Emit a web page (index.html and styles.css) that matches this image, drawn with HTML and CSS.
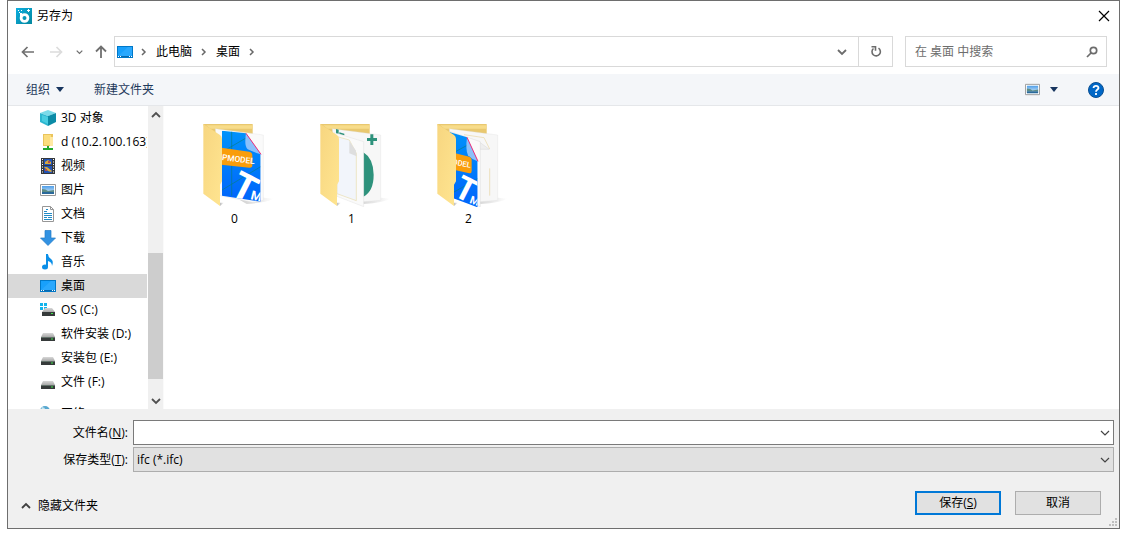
FILE: index.html
```html
<!DOCTYPE html>
<html lang="zh-CN">
<head>
<meta charset="utf-8">
<title>另存为</title>
<link rel="stylesheet" href="styles.css">
</head>
<body>
<svg class="defs" aria-hidden="true">
  <defs>
    <linearGradient id="coverFill" x1="0" y1="0" x2="1" y2="1"><stop offset="0" stop-color="#f7d680"/><stop offset="1" stop-color="#ffe591"/></linearGradient>
    <linearGradient id="modelFill" x1="0" y1="0" x2="0" y2="1"><stop offset="0" stop-color="#0094fb"/><stop offset="1" stop-color="#0063fb"/></linearGradient>
    <linearGradient id="shadowFill"><stop offset="0" stop-color="#bbb"/><stop offset="1" stop-color="#fff"/></linearGradient>
    <linearGradient id="appFill" x1="0" y1="0" x2="1" y2="1"><stop offset="0" stop-color="#0caee0"/><stop offset="1" stop-color="#04879e"/></linearGradient>
    <linearGradient id="driveFill" x1="0" y1="0" x2="0" y2="1"><stop offset="0" stop-color="#d8d8d8"/><stop offset="1" stop-color="#a8a8a8"/></linearGradient>
    <linearGradient id="skyFill" x1="0" y1="0" x2="0" y2="1"><stop offset="0" stop-color="#4d9de8"/><stop offset="1" stop-color="#e4f3fb"/></linearGradient>
    <symbol id="desktop" viewBox="0 0 16 16"><path fill="#0078c8" d="M0 2h16v12H0z"/><path fill="#18a0fb" d="M1 3h14v9H1z"/><path fill="#3bb0ff" d="M1 12 11 3h4v9z" opacity=".5"/><path fill="#0868ad" d="M1 12h14v1H1z"/><path fill="#fff" d="M1 12h1v1H1zM3 12h1v1H3zM12 12h1v1h-1zM14 12h1v1h-1z"/></symbol>
    <symbol id="picture" viewBox="0 0 16 16"><path fill="#fff" stroke="#999" d="M.5 2.500h15v11H.5z"/><path fill="url(#skyFill)" d="M2 4h12v8H2z"/><path fill="#5d8c86" d="M2 7q4 0 6 2l6-1v2H2z"/><path fill="#29699b" d="M2 10h12v2H2z"/></symbol>
    <symbol id="drive" viewBox="0 0 16 16"><path fill="url(#driveFill)" d="M3 7h10l2 4H1z"/><path fill="#363a3a" d="M1 11h14v4H1z"/><path fill="#62716a" d="M1 11h14v1H1z"/><path fill="#3ee64a" d="M11 12.500h2v1h-2z"/></symbol>
    <symbol id="right" viewBox="0 0 6 8"><path d="M1 1l3 3-3 3" fill="none" stroke="#686868" stroke-width="1.500"/></symbol>
    <symbol id="down" viewBox="0 0 10 8"><path d="M1 2l4 4 4-4" fill="none" stroke="currentColor" stroke-width="1.800"/></symbol>
    <symbol id="thin-down" viewBox="0 0 10 8"><path d="M1 2l4 4 4-4" fill="none" stroke="#444" stroke-width="1.200"/></symbol>
    <symbol id="folder-back" viewBox="30 36 225 255"><path fill="url(#shadowFill)" opacity=".7" d="M150 270l60-8 40 4q-20 12-80 16z"/><path fill="#e9c86f" d="M40 42h148v200H90z"/><path fill="#f7dc8a" d="M48 46h139v10H62z"/></symbol>
    <symbol id="folder-cover" viewBox="30 36 225 255"><path fill="url(#shadowFill)" d="M90 278h12l-12 10z"/><path fill="url(#coverFill)" d="M40 42l50 33q6 4 6 12v127l-6 10v64l-50-37z"/></symbol>
    <clipPath id="clipWide"><path d="M96 62l72 8 44 63v142L96 257z"/></clipPath>
    <clipPath id="clipNarrow"><path d="M76 66l53 16 32 72v138l-73-27z"/></clipPath>
  </defs>
</svg>

<main class="dialog">
  <header class="titlebar">
    <svg class="icon" viewBox="0 0 16 16"><path fill="url(#appFill)" d="M0 0h16v16H0z"/><circle cx="8.500" cy="10" r="3.400" fill="none" stroke="#fff" stroke-width="2.800"/><path fill="#fff" d="M4 5h2v5H4zM11 2h3v1h-3zM12 1h1v3h-1zM2 2h1v1H2zM5 2h1v1H5zM3 4h1v1H3z"/></svg>
    <h1>另存为</h1>
    <button class="plain close" aria-label="关闭"><svg width="12" height="12" viewBox="0 0 12 12"><path d="M1 1l10 10M11 1L1 11" stroke="#000" stroke-width="1.200"/></svg></button>
  </header>

  <nav class="navbar">
    <div class="history">
      <button class="plain" aria-label="后退"><svg width="14" height="12" viewBox="0 0 14 12"><path d="M13 6H2M6.500 1L1.500 6l5 5" fill="none" stroke="#707070" stroke-width="1.700"/></svg></button>
      <button class="plain" aria-label="前进" disabled><svg width="14" height="12" viewBox="0 0 14 12"><path d="M1 6h11M7.500 1l5 5-5 5" fill="none" stroke="#dcdcdc" stroke-width="1.700"/></svg></button>
      <button class="plain recent" aria-label="最近位置"><svg width="7" height="6"><use href="#down"/></svg></button>
      <button class="plain" aria-label="上移"><svg width="12" height="13" viewBox="0 0 12 13"><path d="M6 13V2M1 6.500l5-5 5 5" fill="none" stroke="#707070" stroke-width="1.800"/></svg></button>
    </div>
    <div class="address">
      <div class="crumbs">
        <svg class="icon"><use href="#desktop"/></svg>
        <svg class="sep"><use href="#right"/></svg>
        <a href="#">此电脑</a>
        <svg class="sep"><use href="#right"/></svg>
        <a href="#">桌面</a>
        <svg class="sep"><use href="#right"/></svg>
      </div>
      <button class="plain expand" aria-label="以前的位置"><svg width="10" height="8"><use href="#down"/></svg></button>
      <button class="plain refresh" aria-label="刷新"><svg width="12" height="13" viewBox="0 0 12 13"><path d="M8.500 3.200A4.200 4.200 0 1 1 3.500 3.500M1.500 1.800h4v4" fill="none" stroke="#6c6c6c" stroke-width="1.600"/></svg></button>
    </div>
    <label class="search">
      <input type="search" placeholder="在 桌面 中搜索" aria-label="在 桌面 中搜索">
      <svg width="12" height="12" viewBox="0 0 12 12"><circle cx="7.500" cy="4.500" r="3.200" fill="none" stroke="#6c6c6c" stroke-width="1.700"/><path d="M5 7L1 11" stroke="#6c6c6c" stroke-width="1.700"/></svg>
    </label>
  </nav>

  <div class="toolbar">
    <button class="plain">组织 <svg width="8" height="5" viewBox="0 0 8 5"><path fill="#17355f" d="M0 0h8L4 5z"/></svg></button>
    <button class="plain">新建文件夹</button>
    <button class="plain view" aria-label="更改视图"><svg width="15" height="15"><use href="#picture"/></svg><svg width="8" height="5" viewBox="0 0 8 5"><path fill="#17355f" d="M0 0h8L4 5z"/></svg></button>
    <button class="plain help" aria-label="帮助"><svg class="icon" viewBox="0 0 16 16"><circle cx="8" cy="8" r="7.500" fill="#0067c7" stroke="#0b4f91"/><path d="M5.500 6q.2-2.200 2.500-2.200T10.500 6C10.500 7.600 8 7.600 8 9.800M8 11v2" fill="none" stroke="#fff" stroke-width="1.800"/></svg></button>
  </div>

  <div class="content">
    <aside class="sidebar">
      <ul class="tree">
        <li><svg class="icon" viewBox="0 0 16 16"><path fill="#7bdbe9" d="M0 3l8-3 8 3-8 3z"/><path fill="#2cb6cf" d="M0 3l8 3v10l-8-4z"/><path fill="#0b8ba6" d="M16 3L8 6v10l8-4z"/><path fill="#48cde0" d="M2 5l6 2v7l-6-3z"/></svg>3D 对象</li>
        <li><svg class="icon" viewBox="0 0 16 16"><path fill="#eac45c" d="M3 0h10v12H3z"/><path fill="#fbdd7e" d="M4 1h7v10H4z"/><path fill="#ffe9a3" d="M10 3h3v9h-3z"/><path fill="#23a82c" d="M7 12h2v2h4v2H3v-2h4z"/></svg>d (10.2.100.163)</li>
        <li><svg class="icon" viewBox="0 0 16 16"><path fill="#35383c" d="M1 0h14v16H1z"/><path fill="#2254b5" d="M4 1h8v6H4zM4 8h8v7H4z"/><path fill="#d7a83e" d="M5 4l3-2 3 2v2H5zM4 9h3l5 4-1 1-3-1z"/><path fill="#b24c4c" d="M8 3h2v2H8zM5 11h2v2H5z"/><path stroke="#fff" stroke-dasharray="1 1.500" d="M2.500 1v14M13.500 1v14"/></svg>视频</li>
        <li><svg class="icon"><use href="#picture"/></svg>图片</li>
        <li><svg class="icon" viewBox="0 0 16 16"><path fill="#fff" stroke="#969696" d="M2.500.5h8l3 3v12h-11z"/><path fill="none" stroke="#969696" d="M10.500.5v3h3"/><path stroke="#238bc6" d="M4 5.500h3M4 7.500h8M4 9.500h8M4 11.500h3M8 11.500h4M4 13.500h8M6 3.500h2"/></svg>文档</li>
        <li><svg class="icon" viewBox="0 0 16 16"><path fill="#3292e2" stroke="#237bc5" stroke-width=".7" d="M5 .5h6V8h4.500L8 15.500.5 8H5z"/></svg>下载</li>
        <li><svg class="icon" viewBox="0 0 16 16"><ellipse cx="5" cy="13" rx="3" ry="2.500" fill="#0b8fe8"/><path fill="#0b8fe8" d="M6 0h2q0 3 3 5t1 7q0-4-4-5v6H6z"/></svg>音乐</li>
        <li class="selected"><svg class="icon"><use href="#desktop"/></svg>桌面</li>
        <li><svg class="icon" viewBox="0 0 16 16"><path fill="#12b4ec" d="M0 1h3v3H0zM4 1h3v3H4zM0 5h3v3H0zM4 5h3v3H4z"/><path fill="url(#driveFill)" d="M5 6h7l3 4H2z"/><path fill="#363a3a" d="M2 10h13v4H2z"/><path fill="#3ee64a" d="M11 11h2v1h-2z"/></svg>OS (C:)</li>
        <li><svg class="icon"><use href="#drive"/></svg>软件安装 (D:)</li>
        <li><svg class="icon"><use href="#drive"/></svg>安装包 (E:)</li>
        <li><svg class="icon"><use href="#drive"/></svg>文件 (F:)</li>
        <li class="network"><svg class="icon" viewBox="0 0 16 16"><circle cx="5" cy="5" r="5" fill="#58a7cf"/><path fill="#c2e4ef" d="M2 1l3 1-1 2-3 1z"/><path fill="#1686cd" d="M3 7h12v7H3z"/></svg>网络</li>
      </ul>
      <div class="scrollbar">
        <svg class="up" width="10" height="8"><use href="#down"/></svg>
        <div class="track"><div class="thumb"></div></div>
        <svg width="10" height="8"><use href="#down"/></svg>
      </div>
    </aside>

    <section class="files">
      <figure>
        <svg class="folder" viewBox="30 36 225 255">
          <use href="#folder-back" x="30" y="36" width="225" height="255"/>
          <path fill="#fafafa" stroke="#ddd" d="M76 56l93 12 51 7v196l-32 6-98-20z"/>
          <g clip-path="url(#clipWide)">
            <path fill="url(#modelFill)" d="M90 55h125v225H90z"/>
            <path fill="none" stroke="#087f83" stroke-width="2" d="M96 126l72-42M96 240l116-70M125 257V60"/>
            <text class="mark" transform="translate(114 253) rotate(27)" font-size="115">T</text>
            <text class="mark" transform="translate(180 267) rotate(14)" font-size="38">M</text>
          </g>
          <path fill="#8bc0fa" d="M168 70q-6 38 5 48 17 8 39 15z"/>
          <path fill="none" stroke="#f32e78" stroke-width="3" d="M168 70l45 63"/>
          <path fill="#f99d0b" d="M94 113l84 12q9 2 9 11v29q0 9-9 8l-84-9z"/>
          <text class="tag" transform="translate(95 150) rotate(7)" font-size="25">PMODEL</text>
          <use href="#folder-cover" x="30" y="36" width="225" height="255"/>
        </svg>
        <figcaption>0</figcaption>
      </figure>
      <figure>
        <svg class="folder" viewBox="30 36 225 255">
          <use href="#folder-back" x="30" y="36" width="225" height="255"/>
          <path fill="#f7f7f7" stroke="#ddd" d="M76 56l145 19v196l-52 4-79-20z"/>
          <path fill="#2e927c" d="M87 57l8 2v12h-8zM97 67l15 4v5l-15-4zM190 73h9v11h11v9h-11v12h-9V93h-10v-9h10zM169 127q30 18 31 67 0 50-31 66z"/>
          <path fill="#fafafa" stroke="#d8d8d8" d="M82 68l88 27v195l-80-31z"/>
          <path fill="#f2f5fb" stroke="#e9dcae" stroke-width="2" d="M91 80l36 10 21 40v142l-58-21z"/>
          <path fill="#dedede" d="M127 93v37l22 9-3-18z"/>
          <use href="#folder-cover" x="30" y="36" width="225" height="255"/>
        </svg>
        <figcaption>1</figcaption>
      </figure>
      <figure>
        <svg class="folder" viewBox="30 36 225 255">
          <use href="#folder-back" x="30" y="36" width="225" height="255"/>
          <path fill="#f7f7f7" stroke="#ddd" d="M76 56l145 19v196l-52 4-79-20z"/>
          <path fill="none" stroke="#e9d7a5" stroke-width="2" d="M120 74l60 9 17 34M197 175v82"/>
          <path fill="#eee" stroke="#ccc" d="M165 95l31 23h-28z"/>
          <path fill="#fafafa" stroke="#ccc" d="M78 65l52 17 39 13v195l-79-27z"/>
          <g clip-path="url(#clipNarrow)">
            <path fill="url(#modelFill)" d="M76 55h90v240H76z"/>
            <path fill="none" stroke="#087f83" stroke-width="2" d="M76 135l55-30M76 254l85-48"/>
            <text class="mark" transform="translate(84 254) rotate(27)" font-size="98">T</text>
            <text class="mark" transform="translate(135 278) rotate(20)" font-size="32">M</text>
          </g>
          <path fill="#8bc0fa" d="M129 82q-5 39 3 54 11 12 29 18z"/>
          <path fill="none" stroke="#f32e78" stroke-width="3" d="M129 82l33 72"/>
          <path fill="#f99d0b" d="M82 127l54 13q7 3 7 10v32q0 9-7 8l-54-12z"/>
          <text class="tag" transform="translate(84 163) rotate(11)" font-size="23">ODEL</text>
          <use href="#folder-cover" x="30" y="36" width="225" height="255"/>
        </svg>
        <figcaption>2</figcaption>
      </figure>
    </section>
  </div>

  <form class="save-form">
    <div class="fields">
      <label for="filename">文件名(<u>N</u>):</label>
      <div class="combo"><input id="filename" type="text"><svg width="10" height="8"><use href="#thin-down"/></svg></div>
      <label for="filetype">保存类型(<u>T</u>):</label>
      <div class="combo"><select id="filetype"><option>ifc (*.ifc)</option></select><svg width="10" height="8"><use href="#thin-down"/></svg></div>
    </div>
    <div class="actions">
      <button type="button" class="plain hide"><svg class="up" width="10" height="8"><use href="#down"/></svg>隐藏文件夹</button>
      <button type="button" class="push primary"><span>保存(<u>S</u>)</span></button>
      <button type="button" class="push">取消</button>
    </div>
    <svg class="grip" width="9" height="9" viewBox="0 0 9 9"><path fill="#bfbfbf" d="M7 0h2v2H7zM4 3h2v2H4zM7 3h2v2H7zM1 6h2v2H1zM4 6h2v2H4zM7 6h2v2H7z"/></svg>
  </form>
</main>
</body>
</html>
```
FILE: styles.css
```css
* { box-sizing: border-box; }

body {
  display: flex;
  height: 100vh;
  margin: 0;
  padding: 0 7px 7px;
  background: #fff;
  color: #000;
  font: 12px/24px "Open Sans", "Noto Sans CJK SC", sans-serif;
}

svg { display: block; flex: none; }
.defs { position: absolute; width: 0; height: 0; }
.icon { width: 16px; height: 16px; }
.up { transform: rotate(180deg); }

button, input, select { font: inherit; color: inherit; }

.plain {
  display: flex;
  align-items: center;
  padding: 0;
  border: 0;
  background: none;
}

.dialog {
  flex: 1;
  display: flex;
  flex-direction: column;
  min-width: 0;
  border: 1px solid #6e6e6e;
}

.titlebar {
  display: flex;
  align-items: center;
  gap: 5px;
  height: 29px;
  padding: 0 9px 0 8px;
}
.titlebar h1 { margin: 0; font-size: 12px; font-weight: 400; }
.close { margin-left: auto; }

.navbar {
  display: flex;
  gap: 12px;
  padding: 6px 12px 7px 0;
}
.history {
  display: flex;
  align-items: center;
  justify-content: space-between;
  width: 86px;
  margin-left: 13px;
  margin-right: -5px;
}
.recent { color: #707070; margin: 0 -2px; }
.address {
  flex: 1;
  display: flex;
  height: 31px;
  border: 1px solid #d9d9d9;
}
.crumbs {
  flex: 1;
  display: flex;
  align-items: center;
  gap: 9px;
  padding-left: 2px;
}
.crumbs .icon { margin-right: -1px; }
.crumbs a { color: inherit; text-decoration: none; }
.sep { width: 6px; height: 8px; }
.expand { justify-content: center; width: 32px; color: #6c6c6c; }
.refresh { justify-content: center; width: 34px; border-left: 1px solid #d9d9d9; }
.search {
  display: flex;
  align-items: center;
  width: 202px;
  padding: 0 8px 0 9px;
  border: 1px solid #d9d9d9;
}
.search input {
  flex: 1;
  min-width: 0;
  padding: 0;
  border: 0;
  outline: 0;
  background: none;
}
.search input::placeholder { color: #6d6d6d; opacity: 1; }

.toolbar {
  display: flex;
  align-items: center;
  gap: 30px;
  height: 32px;
  padding: 0 15px 0 18px;
  border-bottom: 1px solid #e5e7ea;
  background: #f4f6f9;
  color: #1e395b;
}
.toolbar .plain { gap: 6px; }
.toolbar .view { gap: 10px; margin-left: auto; }

.content { flex: 1; display: flex; min-height: 0; }
.sidebar { display: flex; flex: none; width: 156px; border-right: 1px solid #fafafa; }
.tree {
  width: 139px;
  margin: 0 1px 0 0;
  padding: 0;
  overflow: hidden;
  list-style: none;
  white-space: nowrap;
}
.tree li {
  display: flex;
  align-items: center;
  gap: 5px;
  height: 24px;
  padding-left: 32px;
}
.tree .selected { background: #d9d9d9; }
.tree .network { margin-top: 8px; }
.scrollbar {
  display: flex;
  flex-direction: column;
  align-items: center;
  gap: 4px;
  width: 15px;
  padding: 5px 0 4px;
  background: #f0f0f0;
  color: #505050;
}
.track { flex: 1; width: 100%; }
.thumb { position: relative; top: 48%; height: 47%; background: #cdcdcd; }

.files {
  flex: 1;
  display: flex;
  flex-wrap: wrap;
  align-content: flex-start;
  padding: 16px 12px;
}
.files figure {
  display: flex;
  flex-direction: column;
  align-items: center;
  width: 117px;
  margin: 0;
}
.folder { width: 75px; height: 85px; margin-left: 6px; }
.files figcaption { line-height: 24px; }
.mark { fill: #fff; font-family: Roboto, sans-serif; font-weight: 700; }
.tag { fill: #fff; font-family: Roboto, sans-serif; font-weight: 500; }

.save-form { position: relative; padding: 11px 5px 7px 13px; background: #f0f0f0; }
.fields {
  display: grid;
  grid-template-columns: 107px 1fr;
  gap: 2px 5px;
  align-items: center;
}
.fields label { text-align: right; }
.combo { display: grid; align-items: center; }
.combo > * { grid-area: 1 / 1; }
.combo svg { justify-self: end; margin-right: 4px; pointer-events: none; }
.combo input, .combo select {
  width: 100%;
  height: 25px;
  padding: 0 20px 0 3px;
  border: 1px solid #7a7a7a;
  border-radius: 0;
  background: #fff;
}
.combo select { appearance: none; border-color: #adadad; background: #e1e1e1; }
.actions {
  display: flex;
  gap: 14px;
  padding: 19px 13px 0 0;
}
.hide { gap: 7px; height: 30px; margin-right: auto; }
.hide svg { color: #404040; }
.push {
  width: 86px;
  height: 24px;
  padding: 0;
  border: 1px solid #adadad;
  background: #e1e1e1;
  line-height: 20px;
}
.primary { border: 2px solid #0078d7; }
.grip { position: absolute; right: 2px; bottom: 1px; }
```
